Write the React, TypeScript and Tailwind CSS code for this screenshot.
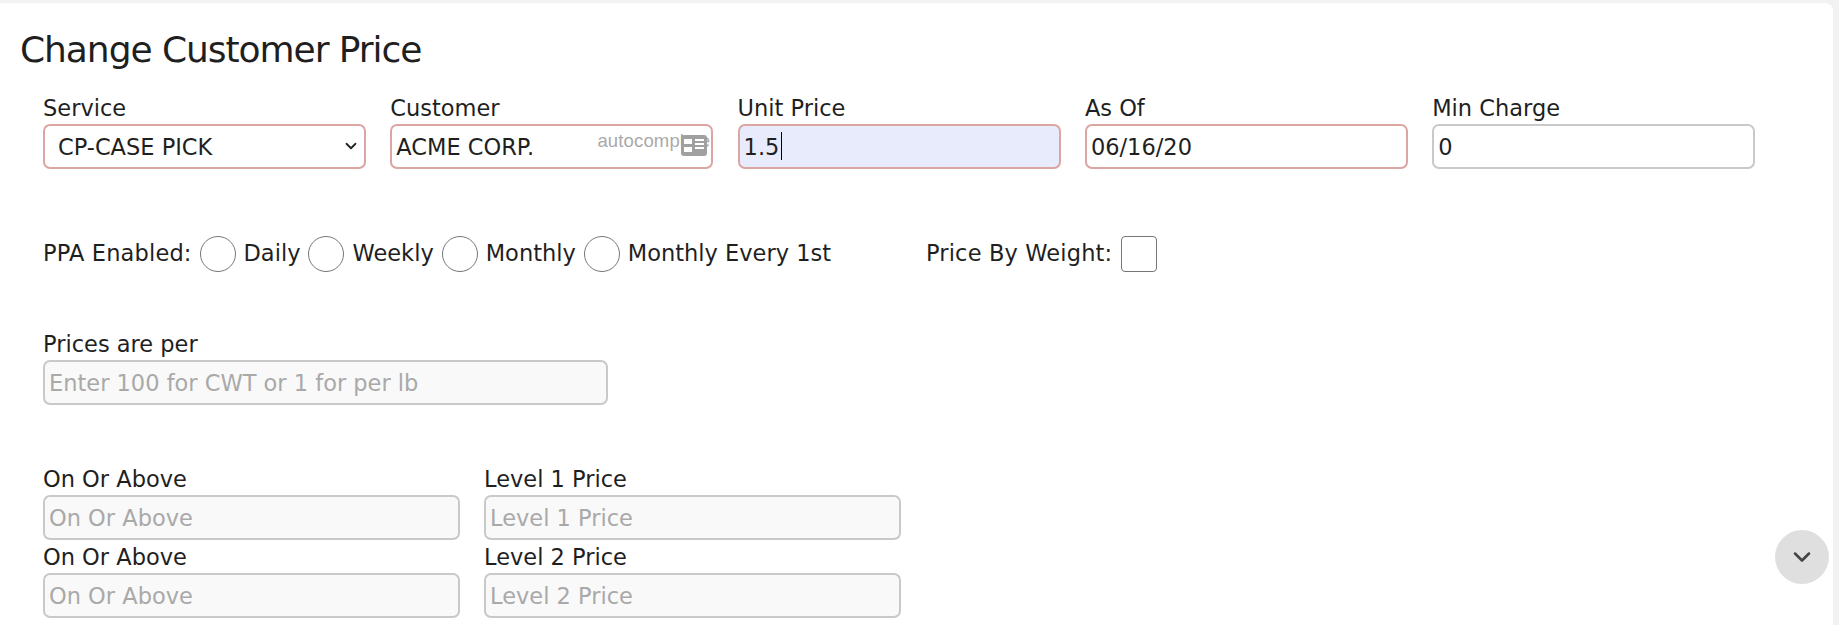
import React from 'react';
import { ChevronDown } from 'lucide-react';

const font = "font-['DejaVu_Sans',sans-serif]";
const fieldBase =
  "block w-full h-[45px] rounded-[7px] border-2 px-1 text-[22.5px] text-[#1f1f1f] outline-none placeholder:text-[#a9a9a9] font-['DejaVu_Sans',sans-serif]";
const labelCls = 'block h-[29px] text-[22.5px] leading-[27px] text-[#1f1f1f]';
const ok = 'border-[#c9c9c9]';
const bad = 'border-[#dba5a2]';

const Field = ({
  label,
  value,
  placeholder,
  invalid,
  tinted,
  muted,
  children,
}: {
  label: string;
  value?: string;
  placeholder?: string;
  invalid?: boolean;
  tinted?: boolean;
  muted?: boolean;
  children?: React.ReactNode;
}) => (
  <div className="w-full">
    <label className={labelCls}>{label}</label>
    <div className="relative">
      <input
        readOnly
        value={value}
        placeholder={placeholder}
        className={`${fieldBase} ${invalid ? bad : ok} ${tinted ? 'bg-[#e8ebfb]' : muted ? 'bg-[#f9f9f9]' : 'bg-white'}`}
      />
      {children}
    </div>
  </div>
);

const Radio = ({ label }: { label: string }) => (
  <>
    <span className="w-9 h-9 rounded-full border border-[#767676] bg-white shrink-0" />
    <span>{label}</span>
  </>
);

const App = () => {
  return (
    <div className={`relative h-[625px] overflow-hidden bg-[#f2f2f2] pt-[3px] pr-[6px] ${font}`}>
      <div className="h-full rounded-tr-lg bg-white">
        <h1 className="pl-5 pt-[22px] h-[92px] text-[36px] leading-[50px] tracking-[-1.05px] text-[#1f1f1f]">
          Change Customer Price
        </h1>

        <div className="pl-[43px]">
          <div className="grid grid-cols-[323px_323px_323px_323px_323px] gap-x-[24.3px]">
            <div>
              <label className={labelCls}>Service</label>
              <div className="relative">
                <select className={`${fieldBase} ${bad} appearance-none bg-white pl-[13px] pt-[2px]`} defaultValue="cp">
                  <option value="cp">CP-CASE PICK</option>
                </select>
                <ChevronDown className="absolute right-[6px] top-[13px] w-[18px] h-[18px] text-[#222]" strokeWidth={2.4} />
              </div>
            </div>
            <Field label="Customer" value="ACME CORP." invalid>
              <span className="absolute right-[3px] top-[7px] font-['Liberation_Sans',sans-serif] text-[18.5px] tracking-[0.15px] leading-5 text-[#a9a9a9]">
                autocomplete
              </span>
              <svg viewBox="0 0 26 21" className="absolute right-[6px] top-[11px] w-[26px] h-[21px]">
                <rect width="26" height="21" rx="3" fill="#a0a0a0" />
                <rect x="3" y="4" width="8" height="5" fill="#fff" />
                <rect x="14" y="4" width="9" height="2" fill="#fff" />
                <rect x="14" y="8" width="9" height="2" fill="#fff" />
                <rect x="3" y="12" width="8" height="5" fill="#fff" />
                <rect x="14" y="12" width="9" height="2" fill="#fff" />
              </svg>
            </Field>
            <Field label="Unit Price" value="1.5" invalid tinted>
              <span className="absolute left-[43px] top-[8px] h-[28px] w-px bg-black" />
            </Field>
            <Field label="As Of" value="06/16/20" invalid />
            <Field label="Min Charge" value="0" />
          </div>

          <div className="flex items-center mt-[67px] h-9 text-[22.5px] text-[#1f1f1f]">
            <div className="flex items-center gap-[8px]">
              <span className="tracking-[0.15px]">PPA Enabled:</span>
              <Radio label="Daily" />
              <Radio label="Weekly" />
              <Radio label="Monthly" />
              <Radio label="Monthly Every 1st" />
            </div>
            <div className="flex items-center gap-[9px] ml-[95px]">
              <span className="tracking-[0.15px]">Price By Weight:</span>
              <span className="w-9 h-9 rounded-[4px] border border-[#767676] bg-white" />
            </div>
          </div>

          <div className="w-[565px] mt-[59px]">
            <Field label="Prices are per" placeholder="Enter 100 for CWT or 1 for per lb" muted />
          </div>

          <div className="grid grid-cols-[417px_417px] gap-x-6 mt-[61px]">
            <Field label="On Or Above" placeholder="On Or Above" muted />
            <Field label="Level 1 Price" placeholder="Level 1 Price" muted />
            <div className="mt-[4px]">
              <Field label="On Or Above" placeholder="On Or Above" muted />
            </div>
            <div className="mt-[4px]">
              <Field label="Level 2 Price" placeholder="Level 2 Price" muted />
            </div>
          </div>
        </div>
      </div>

      <button className="absolute left-[1775px] top-[530px] w-[54px] h-[54px] rounded-full bg-[#e0dfdf] flex items-center justify-center">
        <ChevronDown className="w-7 h-7 text-[#444]" strokeWidth={2.2} />
      </button>
    </div>
  );
};

export default App;
